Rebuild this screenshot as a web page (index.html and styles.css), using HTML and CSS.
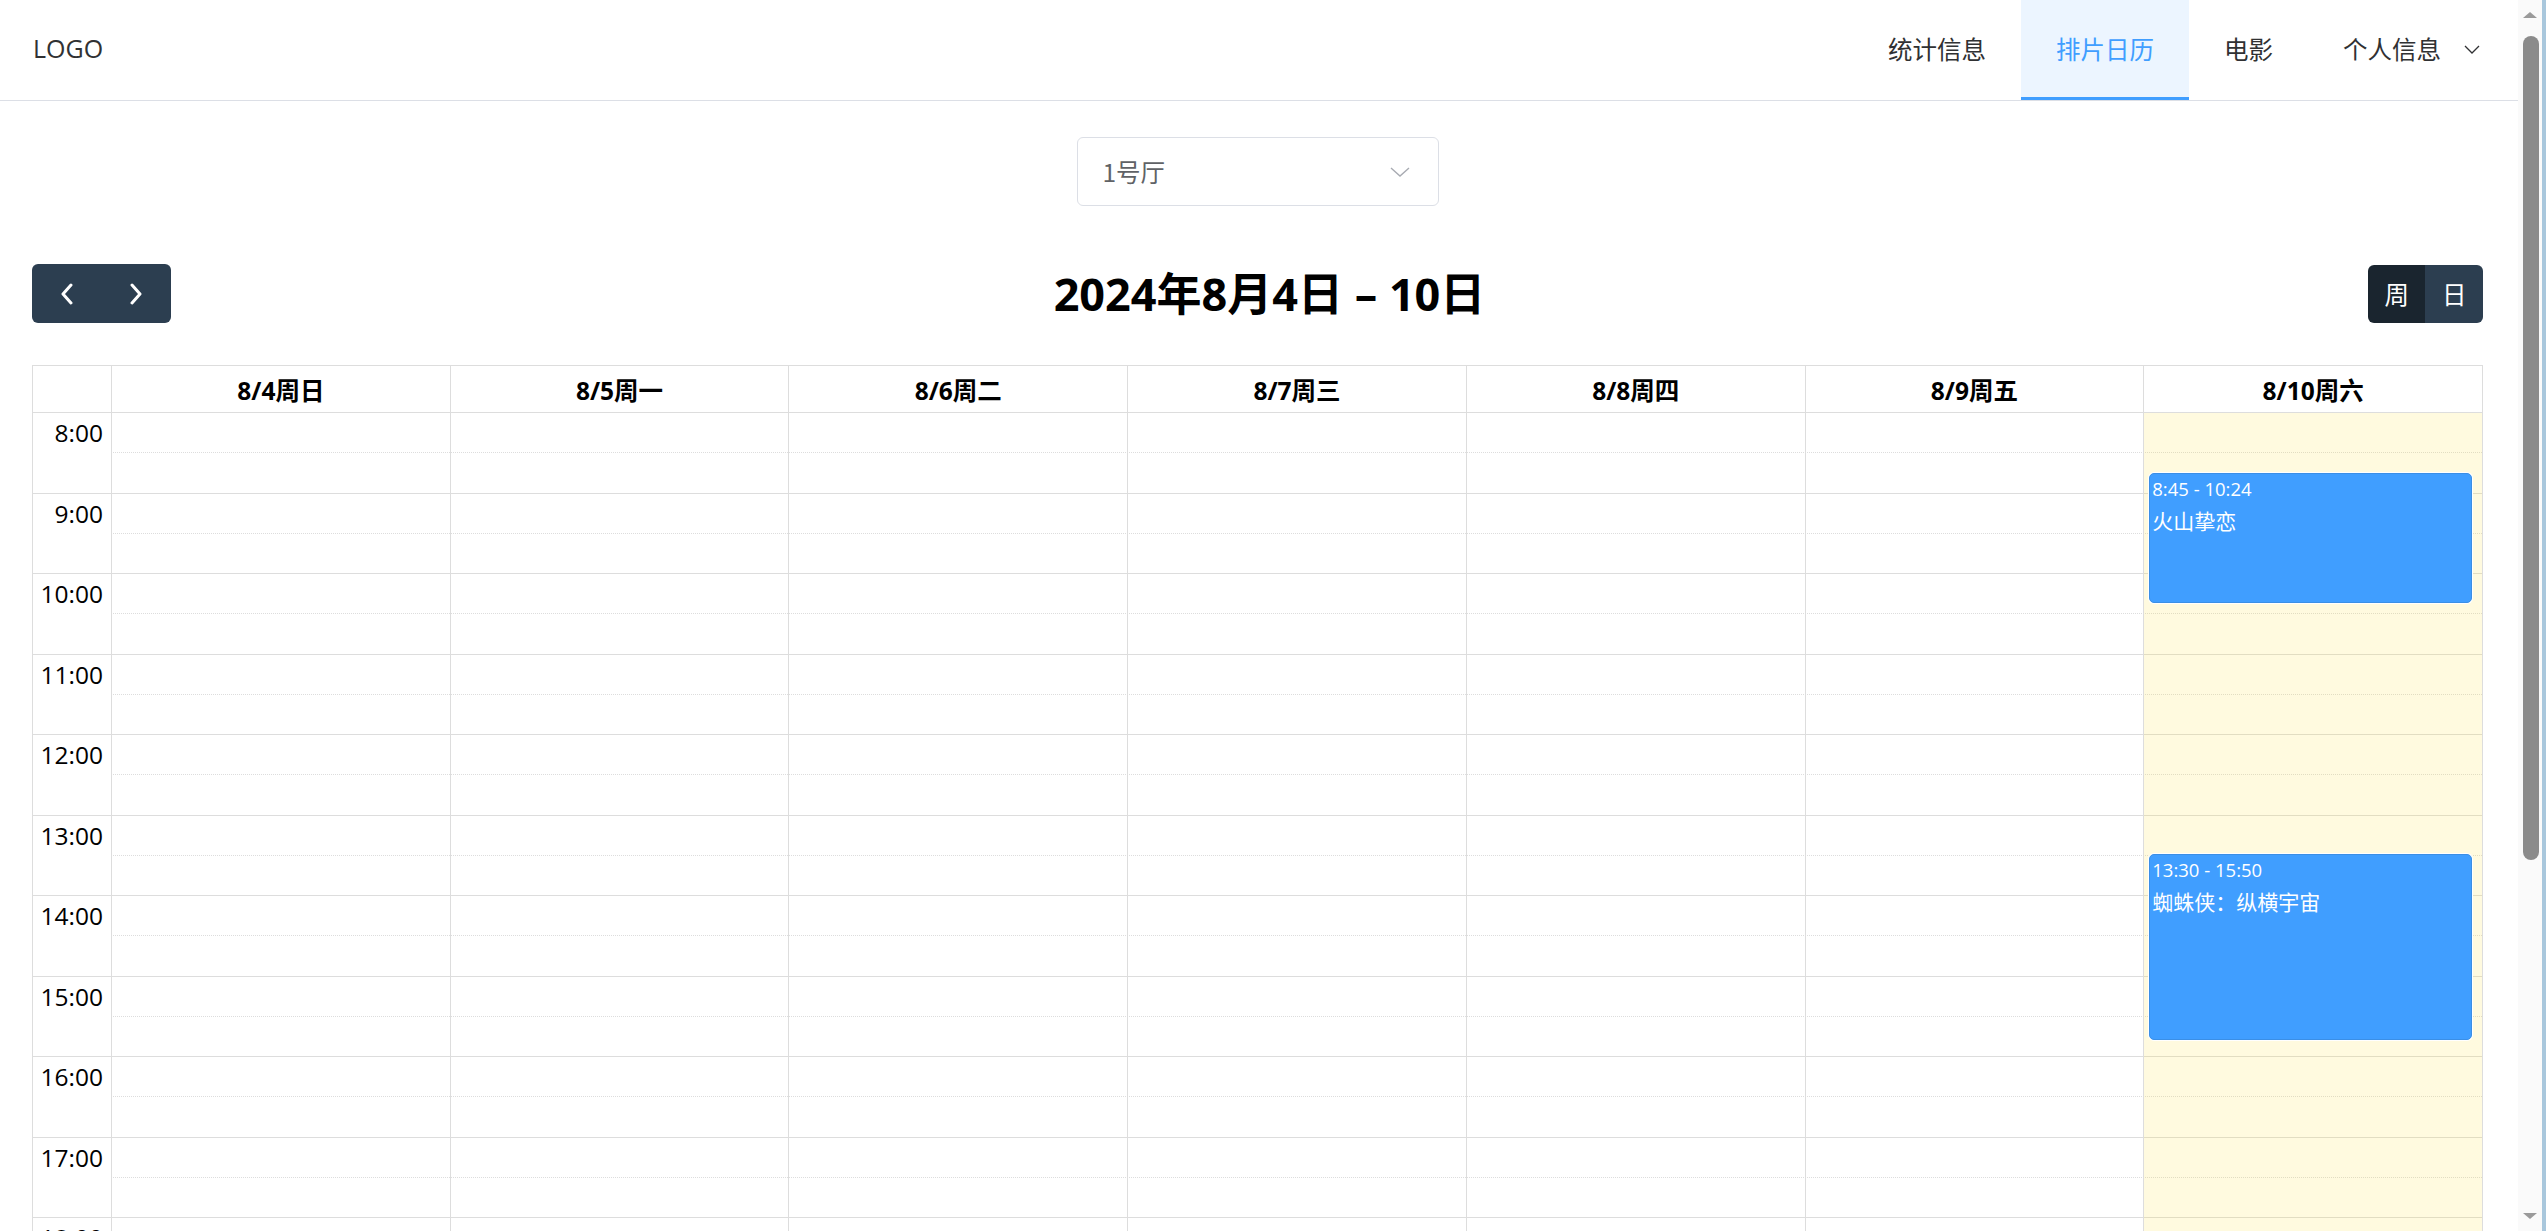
FILE: index.html
```html
<!DOCTYPE html>
<html lang="zh-CN">
<head>
<meta charset="utf-8">
<title>排片日历</title>
<link rel="stylesheet" href="styles.css">
</head>
<body>
<div class="app">
<header class="topbar">
  <div class="logo">LOGO</div>
  <nav class="menu">
    <a class="menu-item">统计信息</a>
    <a class="menu-item active">排片日历</a>
    <a class="menu-item">电影</a>
    <div class="menu-item submenu">个人信息
      <svg class="sub-arrow" width="16" height="9" viewBox="0 0 16 9"><polyline points="1,1 8,8 15,1" fill="none" stroke="#303133" stroke-width="1.3"/></svg>
    </div>
  </nav>
</header>

<main class="page">
  <div class="select-row">
    <div class="select">
      <span class="select-value">1号厅</span>
      <svg class="select-arrow" width="20" height="10" viewBox="0 0 20 10"><polyline points="1,1 10,9 19,1" fill="none" stroke="#a8abb2" stroke-width="1.4"/></svg>
    </div>
  </div>

  <div class="toolbar">
    <div class="btn-group">
      <button class="btn btn-icon"><svg width="16" height="22" viewBox="0 0 16 22"><polyline points="12,2 4,11 12,20" fill="none" stroke="#fff" stroke-width="3" stroke-linecap="round" stroke-linejoin="round"/></svg></button>
      <button class="btn btn-icon"><svg width="16" height="22" viewBox="0 0 16 22"><polyline points="4,2 12,11 4,20" fill="none" stroke="#fff" stroke-width="3" stroke-linecap="round" stroke-linejoin="round"/></svg></button>
    </div>
    <h2 class="title">2024年8月4日 – 10日</h2>
    <div class="btn-group">
      <button class="btn btn-text active">周</button>
      <button class="btn btn-text">日</button>
    </div>
  </div>

  <div class="calendar">
    <div class="cal-head">
      <div class="head-axis"></div>
      <div class="head-cell">8/4周日</div>
      <div class="head-cell">8/5周一</div>
      <div class="head-cell">8/6周二</div>
      <div class="head-cell">8/7周三</div>
      <div class="head-cell">8/8周四</div>
      <div class="head-cell">8/9周五</div>
      <div class="head-cell">8/10周六</div>
    </div>
    <div class="cal-body">
      <div class="slots">
        <div class="hour"><div class="label">8:00</div><div class="halves"><div class="half"></div></div></div>
        <div class="hour"><div class="label">9:00</div><div class="halves"><div class="half"></div></div></div>
        <div class="hour"><div class="label">10:00</div><div class="halves"><div class="half"></div></div></div>
        <div class="hour"><div class="label">11:00</div><div class="halves"><div class="half"></div></div></div>
        <div class="hour"><div class="label">12:00</div><div class="halves"><div class="half"></div></div></div>
        <div class="hour"><div class="label">13:00</div><div class="halves"><div class="half"></div></div></div>
        <div class="hour"><div class="label">14:00</div><div class="halves"><div class="half"></div></div></div>
        <div class="hour"><div class="label">15:00</div><div class="halves"><div class="half"></div></div></div>
        <div class="hour"><div class="label">16:00</div><div class="halves"><div class="half"></div></div></div>
        <div class="hour"><div class="label">17:00</div><div class="halves"><div class="half"></div></div></div>
        <div class="hour"><div class="label">18:00</div><div class="halves"><div class="half"></div></div></div>
        <div class="hour"><div class="label">19:00</div><div class="halves"><div class="half"></div></div></div>
        <div class="hour"><div class="label">20:00</div><div class="halves"><div class="half"></div></div></div>
        <div class="hour"><div class="label">21:00</div><div class="halves"><div class="half"></div></div></div>
        <div class="hour"><div class="label">22:00</div><div class="halves"><div class="half"></div></div></div>
        <div class="hour"><div class="label">23:00</div><div class="halves"><div class="half"></div></div></div>
      </div>
      <div class="cols">
        <div class="col"></div>
        <div class="col"></div>
        <div class="col"></div>
        <div class="col"></div>
        <div class="col"></div>
        <div class="col"></div>
        <div class="col today">
          <div class="event" style="top:60px;height:130px">
            <div class="event-time">8:45 - 10:24</div>
            <div class="event-title">火山挚恋</div>
          </div>
          <div class="event" style="top:441px;height:186px">
            <div class="event-time">13:30 - 15:50</div>
            <div class="event-title">蜘蛛侠：纵横宇宙</div>
          </div>
        </div>
      </div>
    </div>
  </div>
</main>
</div>
<div class="scrollbar">
  <div class="sb-btn"><span class="tri-up"></span></div>
  <div class="sb-track"><div class="sb-thumb"></div></div>
  <div class="sb-btn sb-btn-down"><span class="tri-down"></span></div>
</div>
</body>
</html>
```

FILE: styles.css
```css
html {
  background: #fff;
}
body {
  margin: 0;
  height: 100vh;
  overflow: hidden;
  display: flex;
  font-family: "Open Sans", "Noto Sans CJK SC", sans-serif;
  color: #303133;
  font-size: 24.5px;
}
.app {
  flex: 1;
  min-width: 0;
  overflow: hidden;
}

/* window scrollbar */
.scrollbar {
  width: 28px;
  flex: none;
  box-sizing: border-box;
  background: #fafafa;
  border-right: 4px solid #a9c7dc;
  display: flex;
  flex-direction: column;
}
.sb-btn {
  height: 30px;
  display: flex;
  justify-content: center;
  align-items: center;
  flex: none;
}
.tri-up,
.tri-down {
  width: 0;
  height: 0;
  border-left: 7px solid transparent;
  border-right: 7px solid transparent;
}
.tri-up {
  border-bottom: 6px solid #9a9a9a;
}
.tri-down {
  border-top: 6px solid #9a9a9a;
}
.sb-track {
  flex: 1;
  padding: 6px 3px 0 5px;
}
.sb-thumb {
  width: 16px;
  height: 824px;
  border-radius: 8px;
  background: #8b8b8b;
}

/* header */
.topbar {
  height: 101px;
  box-sizing: border-box;
  border-bottom: 1px solid #dcdfe6;
  display: flex;
  align-items: flex-start;
  justify-content: space-between;
  padding-left: 33px;
}
.logo {
  font-size: 25px;
  line-height: 96px;
  color: #303133;
}
.menu {
  display: flex;
  height: 100px;
}
.menu-item {
  height: 100px;
  box-sizing: border-box;
  padding: 0 35px;
  display: flex;
  align-items: center;
  font-family: "Noto Sans CJK SC", sans-serif;
  font-size: 24.5px;
  color: #303133;
  border-bottom: 3px solid transparent;
}
.menu-item.active {
  background: #ecf5ff;
  color: #409eff;
  border-bottom-color: #409eff;
}
.submenu {
  padding-right: 38px;
}
.sub-arrow {
  margin-left: 23px;
  margin-top: 2px;
}

/* page */
.page {
  padding: 36px 35px 40px 32px;
}
.select-row {
  display: flex;
  justify-content: center;
}
.select {
  width: 362px;
  height: 69px;
  box-sizing: border-box;
  border: 1px solid #dcdfe6;
  border-radius: 6px;
  display: flex;
  align-items: center;
  justify-content: space-between;
  padding: 0 28px 0 25px;
}
.select-value {
  font-family: "Noto Sans CJK SC", sans-serif;
  font-size: 24.5px;
  color: #606266;
}

/* toolbar */
.toolbar {
  margin-top: 58px;
  margin-bottom: 42px;
  display: flex;
  align-items: center;
  justify-content: space-between;
  height: 59px;
}
.btn-group {
  display: flex;
  border-radius: 6px;
  overflow: hidden;
}
.btn {
  border: 0;
  margin: 0;
  background: #2c3e50;
  color: #fff;
  font-family: "Noto Sans CJK SC", sans-serif;
  font-size: 24.5px;
  display: flex;
  align-items: center;
  justify-content: center;
  cursor: pointer;
}
.btn-icon {
  width: 69.5px;
  height: 59px;
}
.btn-text {
  height: 58px;
  padding: 0 16.5px;
}
.btn.active {
  background: #1a252f;
}
.title {
  margin: 0;
  font-size: 45px;
  font-weight: 700;
  color: #000;
  font-family: "Open Sans", "Noto Sans CJK SC", sans-serif;
  line-height: 59px;
}

/* calendar */
.calendar {
  border: 1px solid #ddd;
  color: #000;
}
.cal-head {
  display: grid;
  grid-template-columns: 78px repeat(7, 1fr);
  height: 47px;
  box-sizing: border-box;
  border-bottom: 1px solid #ddd;
}
.head-cell {
  border-left: 1px solid #ddd;
  display: flex;
  align-items: center;
  justify-content: center;
  font-weight: 700;
  font-size: 24.5px;
  font-family: "Open Sans", "Noto Sans CJK SC", sans-serif;
}
.cal-body {
  position: relative;
}
.hour {
  display: grid;
  grid-template-columns: 78px 1fr;
  height: 80.5px;
  box-sizing: border-box;
  border-bottom: 1px solid #ddd;
}
.label {
  height: 40px;
  line-height: 40px;
  text-align: right;
  padding-right: 8px;
  font-size: 24.5px;
  font-family: "Open Sans", "Noto Sans CJK SC", sans-serif;
}
.half {
  height: 40.25px;
  box-sizing: border-box;
  border-bottom: 1px dotted #ddd;
}
.cols {
  position: absolute;
  top: 0;
  bottom: 0;
  left: 78px;
  right: 0;
  display: grid;
  grid-template-columns: repeat(7, 1fr);
}
.col {
  border-left: 1px solid #ddd;
  position: relative;
}
.col.today {
  background: rgba(255, 220, 40, 0.15);
}
.event {
  position: absolute;
  left: 5px;
  right: 10px;
  box-sizing: border-box;
  background: #409eff;
  border: 1px solid #3b8fe6;
  border-radius: 5px;
  box-shadow: 0 0 0 1px #fff;
  color: #fff;
  padding: 1px 2px 0;
  overflow: hidden;
}
.event-time {
  font-size: 18.5px;
  line-height: 28px;
  font-family: "Open Sans", "Noto Sans CJK SC", sans-serif;
  white-space: nowrap;
}
.event-title {
  font-size: 21px;
  line-height: 30px;
  margin-top: 2px;
  font-family: "Noto Sans CJK SC", sans-serif;
}
```
